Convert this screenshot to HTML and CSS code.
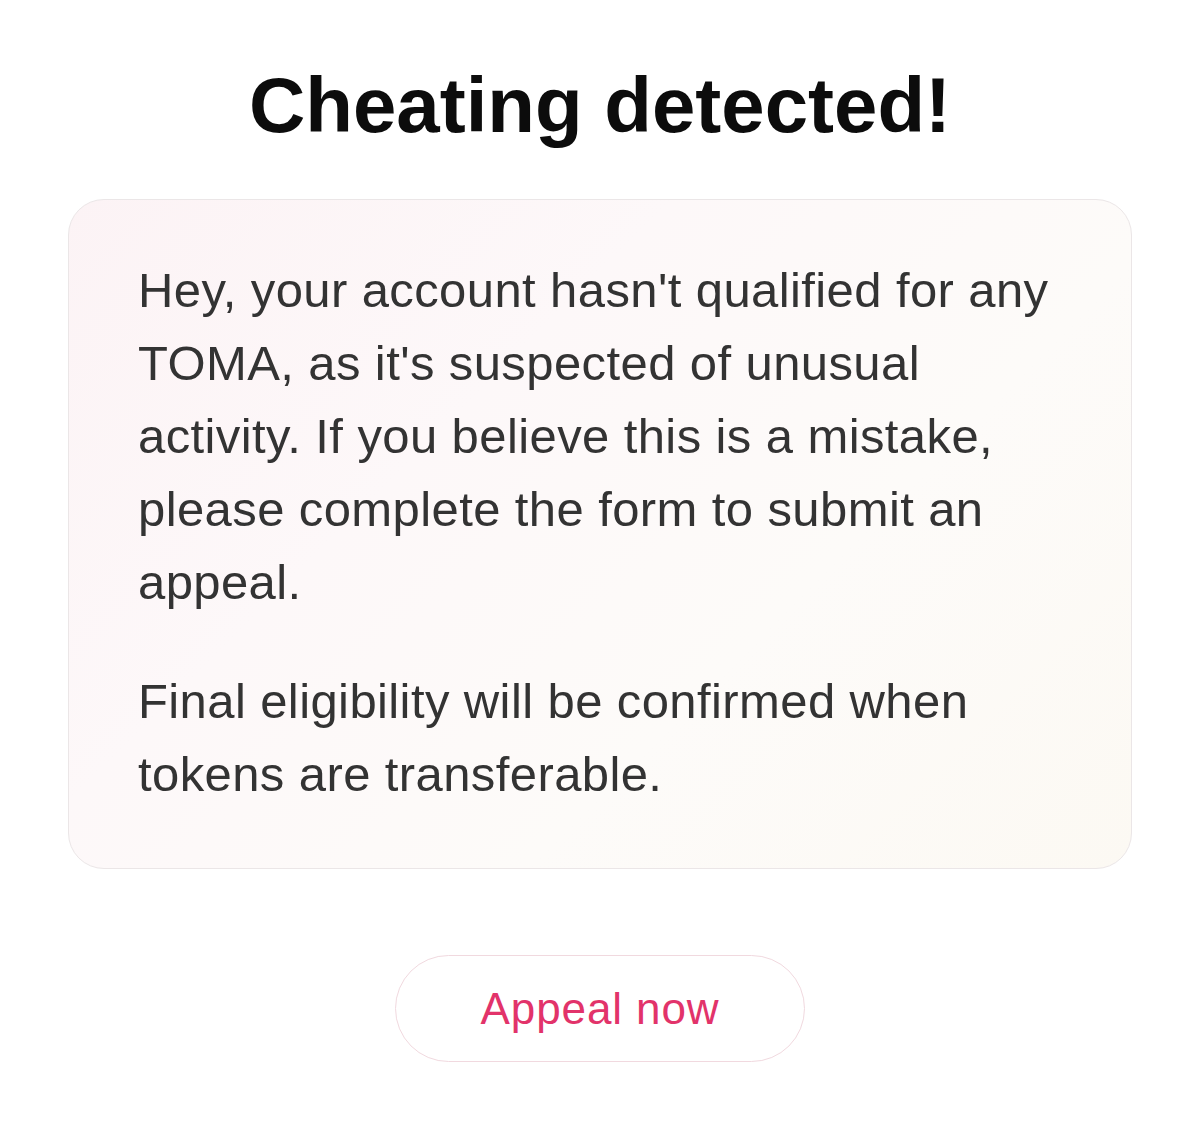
FILE: index.html
```html
<!DOCTYPE html>
<html lang="en">
<head>
<meta charset="utf-8">
<title>Cheating detected!</title>
<link rel="stylesheet" href="styles.css">
</head>
<body>
<main class="page">
  <h1 class="title">Cheating detected!</h1>
  <section class="card">
    <p class="card-text">Hey, your account hasn't qualified for any TOMA, as it's suspected of unusual activity. If you believe this is a mistake, please complete the form to submit an appeal.</p>
    <p class="card-text">Final eligibility will be confirmed when tokens are transferable.</p>
  </section>
  <button class="appeal-btn" type="button">Appeal now</button>
</main>
</body>
</html>
```

FILE: styles.css
```css
html, body {
  margin: 0;
  padding: 0;
  background: #ffffff;
}

body {
  font-family: "Liberation Sans", Arial, sans-serif;
  color: #111;
}

.page {
  width: 1200px;
  min-height: 1128px;
  box-sizing: border-box;
  padding: 60px 68px 0 68px;
  display: flex;
  flex-direction: column;
  align-items: center;
}

.title {
  margin: 0;
  font-size: 78px;
  font-weight: 700;
  line-height: 90px;
  color: #0c0c0c;
}

.card {
  margin-top: 49px;
  width: 100%;
  box-sizing: border-box;
  height: 670px;
  padding: 54px 30px 0 69px;
  border: 1.5px solid #ebe6e7;
  border-radius: 36px;
  background: linear-gradient(135deg, #fcf3f5 0%, #fdf8f9 35%, #fdfbf9 65%, #fcf9f3 100%);
}

.card-text {
  margin: 0 0 46px 0;
  max-width: 930px;
  font-size: 49px;
  line-height: 73px;
  color: #333;
  letter-spacing: 0.4px;
}

.appeal-btn {
  margin-top: 86px;
  width: 410px;
  height: 107px;
  border-radius: 54px;
  border: 1.5px solid #f1d9df;
  background: #fff;
  color: #e2336a;
  font-family: "Liberation Sans", Arial, sans-serif;
  font-size: 44px;
  font-weight: 400;
  letter-spacing: 0.9px;
  padding: 0;
  cursor: pointer;
}
```
